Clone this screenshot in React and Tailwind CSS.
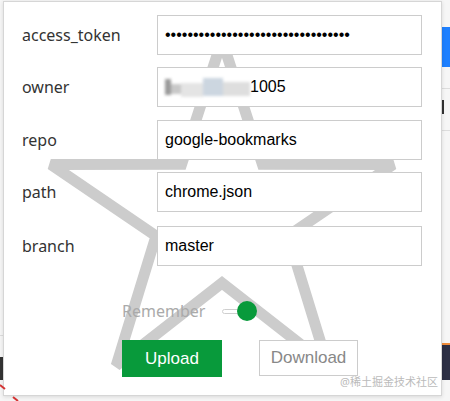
import React from 'react';

const fields = [
  { id: 'access_token', label: 'access_token', value: '•'.repeat(33), mt: 'mt-0' },
  { id: 'owner', label: 'owner', value: '1005', mt: 'mt-[12px]', blurred: true },
  { id: 'repo', label: 'repo', value: 'google-bookmarks', mt: 'mt-[13px]' },
  { id: 'path', label: 'path', value: 'chrome.json', mt: 'mt-[12px]' },
  { id: 'branch', label: 'branch', value: 'master', mt: 'mt-[14px]' },
];

// big outlined star painted behind the form
const StarBackdrop = () => (
  <svg
    className="absolute left-0 top-0 pointer-events-none"
    width="437"
    height="393"
    viewBox="4 2 437 393"
  >
    <polygon
      points="222,40 262.4,164.3 393.2,164.4 288,236 327.8,365.6 222,283 116.2,365.6 156,236 50.8,164.4 181.6,164.3"
      fill="none"
      stroke="#cccccc"
      strokeWidth="11"
      strokeLinejoin="miter"
      strokeMiterlimit="2"
    />
  </svg>
);

const Row = ({ field }) => (
  <div className={`flex items-center h-[40px] ${field.mt}`}>
    <label className="w-[153px] pl-[18px] text-[16px] text-[#333] font-['Noto_Sans',sans-serif]">
      {field.label}
    </label>
    <div className="w-[265px] h-[40px] border border-[#cccccc] bg-white flex items-center pl-[7px] font-['Liberation_Sans',Arial,sans-serif] text-[16px] text-black">
      {field.blurred && (
        <div className="flex items-center h-[22px] w-[85px] blur-[1.5px]">
          <div className="w-[6px] h-[16px] bg-[#9a9a9a]" />
          <div className="w-[10px] h-[10px] mt-[4px] bg-[#c8c8c8]" />
          <div className="w-[22px] h-[14px] mt-[6px] bg-[#e4e4e4]" />
          <div className="w-[20px] h-[18px] bg-[#ccd6e0]" />
          <div className="w-[27px] h-[14px] mt-[4px] bg-[#dedede]" />
        </div>
      )}
      <span>{field.value}</span>
    </div>
  </div>
);

export default function App() {
  return (
    <div className="relative flex w-[450px] h-[401px] overflow-hidden bg-[#f6f6f6]">
      {/* page edge on the left */}
      <div className="flex flex-col w-[3px] shrink-0">
        <div className="h-[335px]" />
        <div className="h-px bg-[#dddddd]" />
        <div className="h-[21px]" />
        <div className="h-[23px] bg-[#333333]" />
      </div>

      {/* popup */}
      <div className="relative shrink-0 mt-px w-[439px] h-[395px] bg-white border border-[#d6d6d6] shadow-[0_1px_4px_rgba(0,0,0,0.12)]">
        <StarBackdrop />
        <div className="relative pt-[13px]">
          {fields.map((f) => (
            <Row key={f.id} field={f} />
          ))}

          <div className="flex items-center h-[20px] mt-[35px] ml-[118px]">
            <span className="text-[16px] text-[#aaaaaa] font-['Noto_Sans',sans-serif] leading-none">
              Remember
            </span>
            <div className="relative ml-[17px] w-[36px] h-[20px]">
              <div className="absolute left-0 top-[8px] w-[26px] h-[5px] rounded-full border border-[#cfcfcf] bg-white" />
              <div className="absolute left-[15px] top-0 w-[20px] h-[20px] rounded-full bg-[#089a3b]" />
            </div>
          </div>

          <div className="flex items-start mt-[19px] ml-[118px] gap-[37px] font-['Liberation_Sans',Arial,sans-serif]">
            <button className="w-[100px] h-[37px] bg-[#089a3b] text-white text-[17px]">
              Upload
            </button>
            <button className="w-[99px] h-[36px] bg-white border border-[#cccccc] text-[#888888] text-[17px]">
              Download
            </button>
          </div>
        </div>

        <span className="absolute right-[3px] bottom-[5px] text-[11px] text-[#bbbbbb] font-['Noto_Sans','Noto_Sans_CJK_SC',sans-serif]">
          @稀土掘金技术社区
        </span>
      </div>

      {/* page edge on the right */}
      <div className="flex flex-col w-[8px] shrink-0">
        <div className="h-[27px]" />
        <div className="h-[40px] bg-[#1e80ff]" />
        <div className="h-[21px]" />
        <div className="h-px bg-[#dddddd]" />
        <div className="h-[11px]" />
        <div className="h-[14px] w-[6px] border-l-2 border-[#333]" />
        <div className="h-[16px]" />
        <div className="h-px bg-[#dddddd]" />
        <div className="h-[212px]" />
        <div className="h-[2px] bg-[#f08c3a]" />
        <div className="h-[35px] bg-[#2c2f44]" />
      </div>

      <svg className="absolute left-0 bottom-0" width="24" height="18" viewBox="0 0 24 18">
        <path d="M0 2 L5 6 M13 14 L18 18" stroke="#d33333" strokeWidth="2" />
      </svg>
    </div>
  );
}
